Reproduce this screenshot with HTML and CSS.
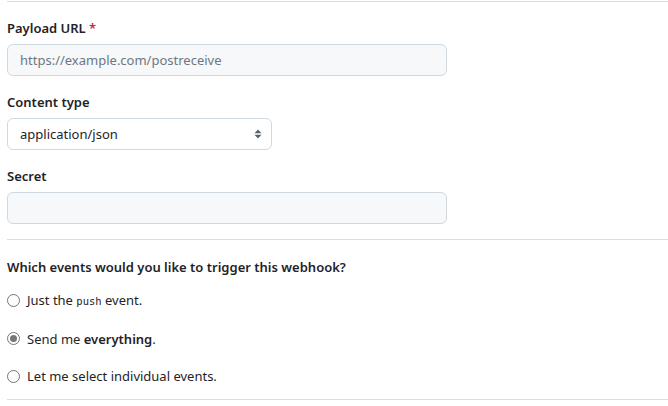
FILE: index.html
```html
<!DOCTYPE html>
<html>
<head>
<meta charset="utf-8">
<link rel="stylesheet" href="styles.css">
</head>
<body>
<div class="page">
  <div class="rule"></div>
  <div class="field">
    <label class="label">Payload URL <span class="req">*</span></label>
    <div class="input wide"><span class="placeholder">https://example.com/postreceive</span></div>
  </div>
  <div class="field">
    <label class="label">Content type</label>
    <div class="select">
      <span>application/json</span>
      <svg class="caret" width="8" height="12" viewBox="0 0 8 12"><path d="M4 1.5 L7.5 5.2 H0.5 Z M4 10.5 L0.5 6.8 H7.5 Z" fill="#59636e"/></svg>
    </div>
  </div>
  <div class="field">
    <label class="label">Secret</label>
    <div class="input wide"></div>
  </div>
  <div class="rule mid"></div>
  <div class="heading">Which events would you like to trigger this webhook?</div>
  <div class="radios">
    <div class="radio-row"><span class="radio"></span><span>Just the <code class="code">push</code> event.</span></div>
    <div class="radio-row"><span class="radio checked"></span><span>Send me <strong>everything</strong>.</span></div>
    <div class="radio-row"><span class="radio"></span><span>Let me select individual events.</span></div>
  </div>
  <div class="rule bottom"></div>
</div>
</body>
</html>
```
FILE: styles.css
```css
* { box-sizing: border-box; }
html, body { margin: 0; padding: 0; background: #fff; }
body {
  font-family: "Noto Sans", "Segoe UI", sans-serif;
  font-size: 13px;
  color: #1f2328;
}
.page {
  padding: 1px 0 0 7px;
}
.rule {
  height: 1px;
  background: #d8dee4;
}
.field { margin-top: 16px; }
.label {
  display: block;
  font-weight: 600;
  line-height: 20px;
  margin-bottom: 6px;
}
.req { color: #d1242f; }
.input {
  height: 32px;
  border: 1px solid #d1d9e0;
  border-radius: 6px;
  background: #f6f8fa;
  display: flex;
  align-items: center;
  padding: 0 12px;
}
.input.wide { width: 440px; }
.placeholder { color: #6e7781; }
.select {
  width: 265px;
  height: 32px;
  border: 1px solid #d1d9e0;
  border-radius: 6px;
  background: #fff;
  display: flex;
  align-items: center;
  justify-content: space-between;
  padding: 0 9px 0 12px;
}
.rule.mid { margin-top: 15px; }
.heading {
  margin-top: 17px;
  font-weight: 600;
  line-height: 20px;
}
.radios {
  margin-top: 13px;
  display: flex;
  flex-direction: column;
  gap: 17.5px;
}
.radio-row {
  display: flex;
  align-items: center;
  gap: 7px;
  line-height: 20px;
}
.radio {
  width: 13px;
  height: 13px;
  border: 1px solid #767676;
  border-radius: 50%;
  background: #fff;
  flex: none;
  position: relative;
}
.radio.checked::after {
  content: "";
  position: absolute;
  left: 2px; top: 2px;
  width: 7px; height: 7px;
  border-radius: 50%;
  background: #767676;
}
.code {
  font-family: "DejaVu Sans Mono", monospace;
  font-size: 10.5px;
}
strong { font-weight: 600; }
.rule.bottom { margin-top: 13px; }
```
